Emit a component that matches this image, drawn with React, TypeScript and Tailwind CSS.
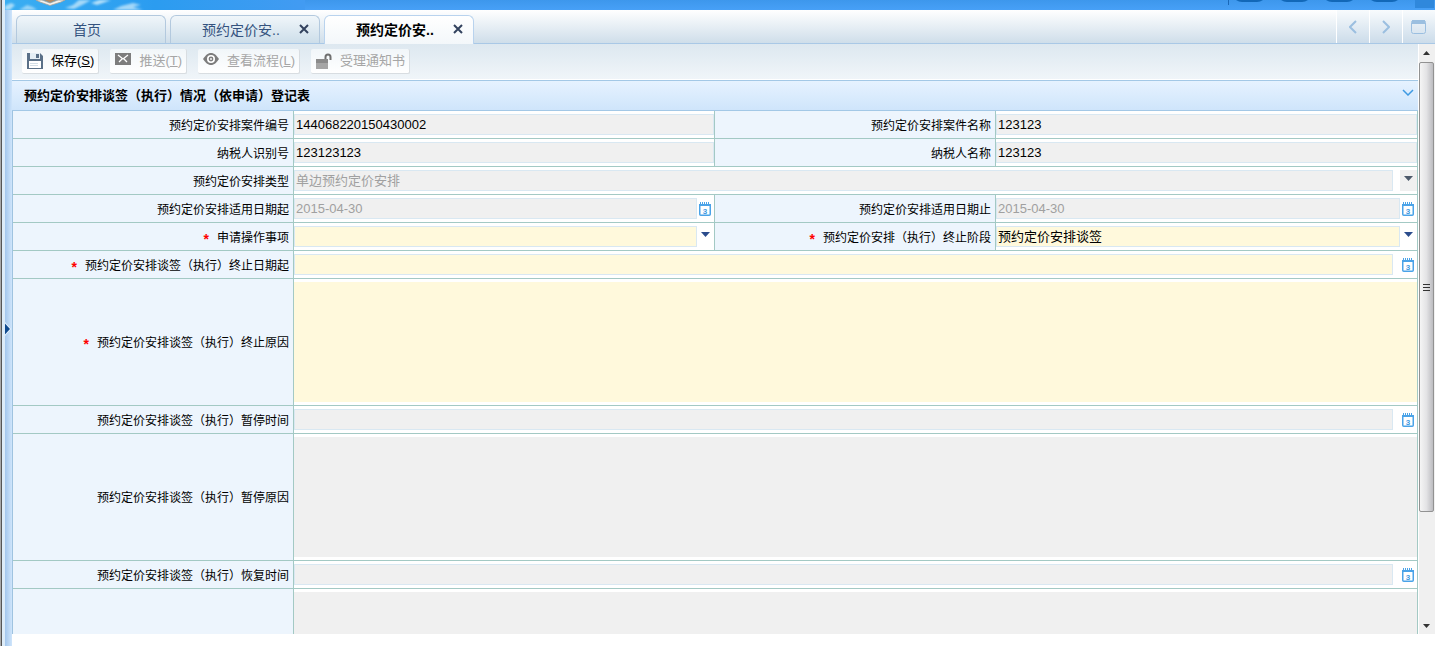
import { useState } from 'react';
import type { ReactNode } from 'react';

type FieldKind = 'text' | 'select' | 'date' | 'area';

interface Field {
  id: string;
  label: string;
  kind: FieldKind;
  value?: string;
  required?: boolean;
  disabled?: boolean;
  readOnly?: boolean;
  wide?: boolean;
}

const fields: Field[] = [
  { id: 'caseNo', label: '预约定价安排案件编号', kind: 'text', value: '144068220150430002', readOnly: true },
  { id: 'caseName', label: '预约定价安排案件名称', kind: 'text', value: '123123', readOnly: true },
  { id: 'taxpayerNo', label: '纳税人识别号', kind: 'text', value: '123123123', readOnly: true },
  { id: 'taxpayerName', label: '纳税人名称', kind: 'text', value: '123123', readOnly: true },
  { id: 'type', label: '预约定价安排类型', kind: 'select', value: '单边预约定价安排', disabled: true, wide: true },
  { id: 'applyFrom', label: '预约定价安排适用日期起', kind: 'date', value: '2015-04-30', disabled: true },
  { id: 'applyTo', label: '预约定价安排适用日期止', kind: 'date', value: '2015-04-30', disabled: true },
  { id: 'action', label: '申请操作事项', kind: 'select', required: true },
  { id: 'stage', label: '预约定价安排（执行）终止阶段', kind: 'select', value: '预约定价安排谈签', required: true },
  { id: 'endDate', label: '预约定价安排谈签（执行）终止日期起', kind: 'date', required: true, wide: true },
  { id: 'endReason', label: '预约定价安排谈签（执行）终止原因', kind: 'area', required: true, wide: true },
  { id: 'pauseDate', label: '预约定价安排谈签（执行）暂停时间', kind: 'date', disabled: true, wide: true },
  { id: 'pauseReason', label: '预约定价安排谈签（执行）暂停原因', kind: 'area', disabled: true, wide: true },
  { id: 'resumeDate', label: '预约定价安排谈签（执行）恢复时间', kind: 'date', disabled: true, wide: true },
  { id: 'resumeReason', label: '', kind: 'area', disabled: true, wide: true },
];

const SaveIcon = () => (
  <svg width="16" height="16" viewBox="0 0 16 16" aria-hidden="true">
    <path d="M0 0h13l3 3v13H0z" fill="#5a7088" />
    <path d="M3 0h10v6H3z" fill="#e4eef5" />
    <path d="M9 1h3v4H9z" fill="#5a7088" />
    <path d="M2 8h12v7H2z" fill="#fff" />
    <path d="M3 10.500h8M3 12.500h8" stroke="#d3dee6" />
  </svg>
);

const MailIcon = () => (
  <svg className="mb-1" width="16" height="12" viewBox="0 0 16 12" aria-hidden="true">
    <path d="M0 0h16v12H0z" fill="#7d7d7d" />
    <path d="M3 2l5 4 5-4M4 9l3-3M12 9L9 6" fill="none" stroke="#fff" strokeWidth="1.3" />
  </svg>
);

const EyeIcon = () => (
  <svg className="mb-1" width="16" height="12" viewBox="0 0 16 12" aria-hidden="true">
    <path d="M0 6C3 1.500 5.500 0 8 0s5 1.500 8 6c-3 4.500-5.500 6-8 6S3 10.500 0 6z" fill="#7d7d7d" />
    <circle cx="8" cy="6" r="4" fill="#fff" />
    <circle cx="8" cy="6" r="2.400" fill="#7d7d7d" />
    <circle cx="8" cy="6" r="0.900" fill="#fff" />
  </svg>
);

const UnlockIcon = () => (
  <svg width="16" height="16" viewBox="0 0 16 16" aria-hidden="true">
    <path d="M9.500 7V4a2.500 2.500 0 0 1 5 0v3" fill="none" stroke="#6f6f6f" strokeWidth="2" />
    <path d="M0 6h12v10H0z" fill="#a5a5a5" />
    <path d="M0 6h12v4H0z" fill="#8a8a8a" />
  </svg>
);

const CalendarIcon = () => (
  <svg width="12" height="14" viewBox="0 0 12 14" aria-hidden="true">
    <rect x="0.750" y="2.750" width="10.500" height="10.500" rx="1" fill="#fff" stroke="#4aa3e8" strokeWidth="1.500" />
    <path d="M0 2h12v2H0z" fill="#4aa3e8" />
    <path d="M1 1h10" stroke="#4aa3e8" strokeWidth="2" strokeDasharray="1 1" />
    <text x="6" y="12" textAnchor="middle" fontSize="8" fontWeight="bold" fill="#3f9ae2">3</text>
  </svg>
);

const CloseIcon = () => (
  <svg width="10" height="10" viewBox="0 0 10 10" aria-hidden="true">
    <path d="M1 1l8 8M9 1l-8 8" stroke="#33425e" strokeWidth="2" />
  </svg>
);

const Banner = () => (
  <header className="h-2.5 flex items-start justify-between overflow-hidden bg-linear-to-b from-[#3d97ec] to-[#47a0f7]">
    <svg width="300" height="10" viewBox="0 0 300 10" aria-hidden="true">
      <defs>
        <linearGradient id="sky" x1="0" x2="1">
          <stop offset="0" stopColor="#3aaef2" />
          <stop offset="0.5" stopColor="#2b9cf0" />
          <stop offset="1" stopColor="#429bf2" />
        </linearGradient>
        <filter id="haze" x="-20%" y="-50%" width="140%" height="200%">
          <feGaussianBlur stdDeviation="1" />
        </filter>
      </defs>
      <path d="M0 0h300v10H0z" fill="url(#sky)" />
      <g fill="#d5effc" filter="url(#haze)">
        <path d="M0 6l6-3 4 2-5 5H0z" opacity="0.7" />
        <path d="M14 10l8-5 6 2 4 3z" opacity="0.6" />
        <path d="M60 8l8-3 6-5h12l-7 4-10 5z" opacity="0.7" />
        <path d="M86 3l8-3h12l-8 3-6 2z" opacity="0.8" />
        <path d="M108 10l8-4 12-3 8 2-8 2 10 3z" opacity="0.7" />
      </g>
      <path d="M31 0l4 2 10 3.500L56 2l4-2h-7l-8 3-8-3z" fill="#f4f1ec" stroke="#a9a198" strokeWidth="0.800" />
      <path d="M39 0l6 2.500L51 0z" fill="#b58a63" />
    </svg>
    <svg width="208" height="10" viewBox="0 0 208 10" aria-hidden="true">
      <path d="M1.500 0v5" stroke="#1a68b8" />
      <path d="M9 0h27q-3 2-6 2H15q-3 0-6-2zM54 0h27q-3 2-6 2H60q-3 0-6-2zM99 0h27q-3 2-6 2h-15q-3 0-6-2zM144 0h27q-3 2-6 2h-15q-3 0-6-2z" fill="#1268b8" />
      <path d="M188 0h19v8h-19z" fill="#2f88dc" />
    </svg>
  </header>
);

interface TabProps {
  title: string;
  active: boolean;
  closable?: boolean;
  onSelect: () => void;
}

const Tab = ({ title, active, closable, onSelect }: TabProps) => (
  <div
    className={
      active
        ? 'w-[150px] h-[29px] flex items-center rounded-t-md border border-b-0 border-[#b9d3ee] bg-linear-to-b from-white to-[#f3f7fa]'
        : 'w-[150px] h-7 flex items-center rounded-t-md border border-b-0 border-[#b3c9de] bg-linear-to-b from-[#f0f6fa] to-[#cddeea]'
    }
  >
    <button
      type="button"
      onClick={onSelect}
      className={`flex-1 pr-2 text-sm leading-5 ${closable ? 'pl-5' : ''} ${active ? 'font-bold text-black' : 'text-[#34527e]'}`}
    >
      {title}
    </button>
    {closable && (
      <button type="button" aria-label="关闭" className="pr-2.5 pb-0.5">
        <CloseIcon />
      </button>
    )}
  </div>
);

const TabBar = () => {
  const [current, setCurrent] = useState(2);
  const titles = ['首页', '预约定价安..', '预约定价安..'];

  return (
    <nav className="h-[34px] flex justify-between border-b border-[#a9c8e6] bg-linear-to-b from-white to-[#cfdeea]">
      <div className="flex items-end gap-1 pl-1 -mb-px">
        {titles.map((title, i) => (
          <div key={i} className={i === current ? '' : 'pb-px'}>
            <Tab title={title} active={i === current} closable={i > 0} onSelect={() => setCurrent(i)} />
          </div>
        ))}
      </div>
      <div className="flex text-[#9bbfe0]">
        <button type="button" aria-label="向左" className="w-[33px] flex items-center justify-center border-l border-white bg-linear-to-b from-[#f8fbfd] to-[#ccdcea]">
          <svg width="8" height="14" viewBox="0 0 8 14" fill="none" stroke="currentColor" strokeWidth="2"><path d="M7 1L1 7l6 6" /></svg>
        </button>
        <button type="button" aria-label="向右" className="w-[33px] flex items-center justify-center border-l border-white bg-linear-to-b from-[#f8fbfd] to-[#ccdcea]">
          <svg width="8" height="14" viewBox="0 0 8 14" fill="none" stroke="currentColor" strokeWidth="2"><path d="M1 1l6 6-6 6" /></svg>
        </button>
        <button type="button" aria-label="最大化" className="w-[33px] flex items-center justify-center border-l border-white bg-linear-to-b from-[#f8fbfd] to-[#ccdcea]">
          <svg width="16" height="14" viewBox="0 0 16 14" fill="none" stroke="currentColor"><rect x="0.5" y="0.5" width="14" height="13" rx="2" /><path d="M1 2h13" strokeWidth="4" /></svg>
        </button>
      </div>
    </nav>
  );
};

interface ToolButtonProps {
  icon: ReactNode;
  text: string;
  hotkey?: string;
  disabled?: boolean;
}

const ToolButton = ({ icon, text, hotkey, disabled }: ToolButtonProps) => (
  <button
    type="button"
    disabled={disabled}
    className="h-[25px] flex items-center gap-2 rounded-xs border-r border-b border-[#d8dde1] bg-linear-to-b from-[#f1f6f9] to-white pl-[5px] pr-1 text-[13px] leading-5 text-black disabled:text-[#a6a6a6]"
  >
    {icon}
    <span className="whitespace-nowrap">
      {text}
      {hotkey && <>(<u>{hotkey}</u>)</>}
    </span>
  </button>
);

const Toolbar = () => (
  <div className="h-9 flex items-start gap-[11px] pl-2.5 pt-[5px] border-b border-white bg-linear-to-b from-[#dde8f0] to-[#f0f5f9]">
    <ToolButton icon={<SaveIcon />} text="保存" hotkey="S" />
    <ToolButton icon={<MailIcon />} text="推送" hotkey="T" disabled />
    <ToolButton icon={<EyeIcon />} text="查看流程" hotkey="L" disabled />
    <ToolButton icon={<UnlockIcon />} text="受理通知书" disabled />
  </div>
);

const controlBase =
  'min-w-0 flex-1 h-[21px] rounded-none border border-[#d9e8f2] px-px text-[13px] leading-[19px] text-black disabled:opacity-100 disabled:text-[#a0a0a0] outline-none';

const FieldControl = ({ field }: { field: Field }) => {
  const tint = field.required ? 'bg-[#fff9dc]' : 'bg-[#f0f0f0]';

  if (field.kind === 'area') {
    return (
      <textarea
        id={field.id}
        aria-label={field.label ? undefined : '恢复原因'}
        disabled={field.disabled}
        className={`block w-full h-[120px] resize-none p-1 text-[13px] outline-none ${tint}`}
      />
    );
  }

  if (field.kind === 'text') {
    return <input id={field.id} type="text" defaultValue={field.value} readOnly={field.readOnly} className={`${controlBase} ${tint}`} />;
  }

  return (
    <>
      {field.kind === 'select' ? (
        <select id={field.id} disabled={field.disabled} defaultValue={field.value} className={`${controlBase} appearance-none ${tint}`}>
          <option>{field.value ?? ''}</option>
        </select>
      ) : (
        <input id={field.id} type="text" defaultValue={field.value} disabled={field.disabled} className={`${controlBase} ${tint}`} />
      )}
      {field.kind === 'select' ? (
        <button
          type="button"
          aria-label="展开"
          disabled={field.disabled}
          className={`w-[17px] h-[21px] flex justify-center pt-1.5 ${field.wide ? 'ml-[7px]' : ''} ${field.disabled ? 'bg-[#f0f0f0] text-[#4d5a6b]' : 'text-[#2b4c8c]'}`}
        >
          <svg width="9" height="5" viewBox="0 0 9 5"><path d="M0 0h9L4.500 5z" fill="currentColor" /></svg>
        </button>
      ) : (
        <button type="button" aria-label="选择日期" className={`w-[17px] h-[21px] flex items-center pl-0.5 pt-px ${field.wide ? 'ml-[7px]' : ''}`}>
          <CalendarIcon />
        </button>
      )}
    </>
  );
};

const FormGrid = () => (
  <form className="grid grid-cols-[281fr_421fr_281fr_422fr] border-l border-[#9fc3e0]">
    {fields.map(field => (
      <div key={field.id} className={field.wide ? 'col-span-4 grid grid-cols-subgrid' : 'col-span-2 grid grid-cols-subgrid'}>
        <div className="flex items-center justify-end gap-2 border-r border-b border-[#a3c9c4] bg-[#edf5fd] pt-0.5 pr-1 text-xs leading-4 text-black">
          {field.required && <span className="text-sm leading-3 h-2.5 font-bold text-[#f00]">*</span>}
          <label htmlFor={field.id} className="whitespace-nowrap">{field.label}</label>
        </div>
        <div className={field.wide ? 'col-span-3 flex border-r border-b border-[#a3c9c4] bg-white py-[3px]' : 'flex border-r border-b border-[#a3c9c4] bg-white py-[3px]'}>
          <FieldControl field={field} />
        </div>
      </div>
    ))}
  </form>
);

const ScrollRail = () => (
  <div aria-hidden="true" className="w-4 shrink-0 flex flex-col items-center bg-[#f0f0f0] pr-px pb-1.5">
    <div className="h-[18px] flex items-center">
      <svg width="7" height="4" viewBox="0 0 7 4"><path d="M3.500 0L7 4H0z" fill="#333" /></svg>
    </div>
    <div className="w-[15px] h-[79%] max-h-[450px] flex flex-col items-center justify-center gap-0.5 rounded-xs border border-[#929292] bg-linear-to-r from-[#f5f5f5] via-[#e3e3e5] to-[#bcbcc0]">
      <span className="w-[7px] h-px bg-[#333]" />
      <span className="w-[7px] h-px bg-[#333]" />
      <span className="w-[7px] h-px bg-[#333]" />
    </div>
    <svg className="mt-auto" width="7" height="4" viewBox="0 0 7 4"><path d="M0 0h7L3.500 4z" fill="#333" /></svg>
  </div>
);

const App = () => {
  const [open, setOpen] = useState(true);

  return (
    <div className="h-screen flex overflow-hidden bg-white font-['Liberation_Sans','Noto_Sans_CJK_SC',sans-serif]">
      <div className="w-0.5 shrink-0 border-r border-[#555] bg-[#a9a9a9]" />
      <div className="w-[3px] shrink-0 bg-[#dcebf8]" />
      <div className="min-w-0 flex-1 flex flex-col">
        <Banner />
        <div className="min-h-0 flex-1 flex">
          <div className="w-[7px] shrink-0 flex items-center bg-linear-to-r from-[#a3c6ec] to-[#cfe5fb]">
            <button type="button" aria-label="展开菜单" className="pt-0.5">
              <svg width="7" height="14" viewBox="0 0 7 14"><path d="M0 0l6 7-6 7z" fill="#eaf5ff" /><path d="M0 1.500L5 7l-5 5.500z" fill="#0f4a8f" /></svg>
            </button>
          </div>
          <div className="min-w-0 flex-1 flex flex-col pb-3">
            <TabBar />
            <div className="min-h-0 flex-1 flex">
              <main className="min-w-0 flex-1 overflow-hidden mr-px">
                <Toolbar />
                <div className="h-[31px] flex items-center justify-between border-y border-[#a3c8e6] bg-linear-to-b from-[#e6f2ff] to-[#cfe5fb] pl-3 pr-1">
                  <h1 className="text-[13px] leading-5 font-bold text-black">预约定价安排谈签（执行）情况（依申请）登记表</h1>
                  <button type="button" aria-label="收起" aria-expanded={open} onClick={() => setOpen(!open)} className="pb-1.5">
                    <svg width="12" height="7" viewBox="0 0 12 7" fill="none" stroke="#3f9ae2" strokeWidth="1.500"><path d="M1 1l5 5 5-5" /></svg>
                  </button>
                </div>
                {open && <FormGrid />}
              </main>
              <ScrollRail />
            </div>
          </div>
        </div>
      </div>
    </div>
  );
};

export default App;
